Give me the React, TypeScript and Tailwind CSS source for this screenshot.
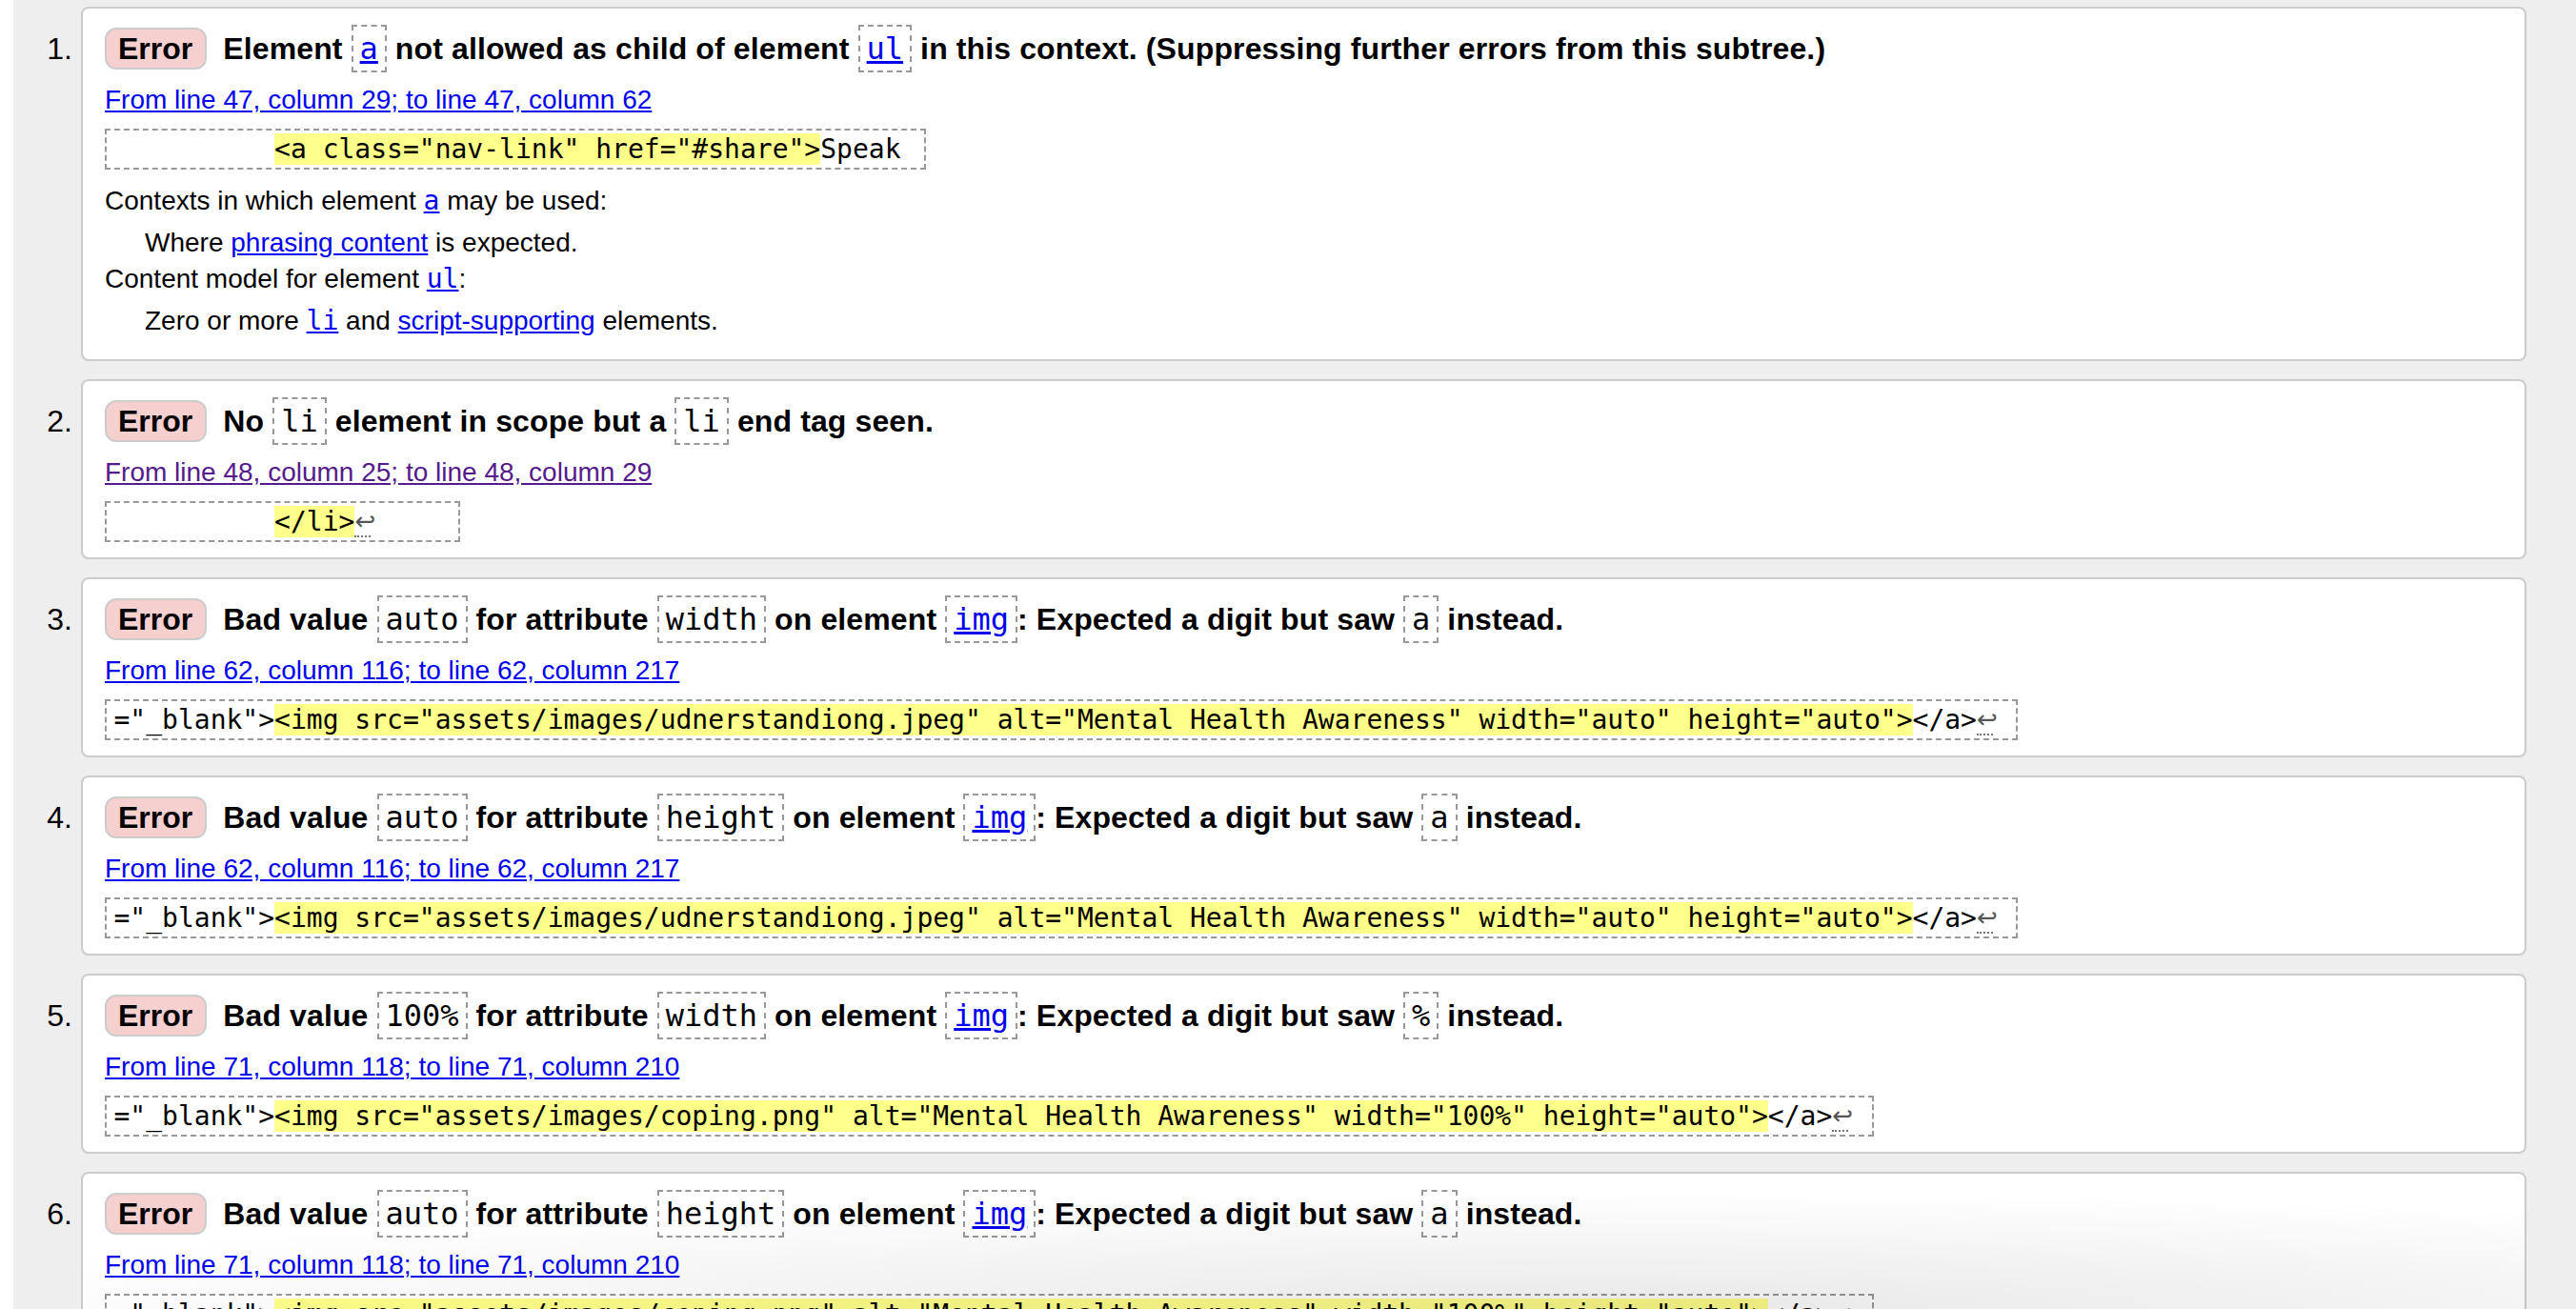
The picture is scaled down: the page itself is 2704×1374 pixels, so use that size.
import React from "react";

type Part = string | { c: string; link?: boolean };

const LINK = "text-[#0000ee] underline";

function TitleCode({ c, link }: { c: string; link?: boolean }) {
  return (
    <code className="font-['DejaVu_Sans_Mono',monospace] font-normal tracking-normal border-2 border-dashed border-[#999] px-[7px] py-[4px]">
      {link ? <span className={LINK}>{c}</span> : c}
    </code>
  );
}

function Title({ parts }: { parts: Part[] }) {
  return (
    <div className="text-[32px] leading-[44px] font-bold">
      <span className="inline-block h-[44px] leading-[40px] border-2 border-[#ccc] bg-[#f6cfcf] rounded-[12px] pl-[12px] pr-[13px] align-baseline">
        Error
      </span>
      <span className="ml-[17px] tracking-[0.12px]">
        {parts.map((p, i) =>
          typeof p === "string" ? (
            <React.Fragment key={i}>{p}</React.Fragment>
          ) : (
            <TitleCode key={i} c={p.c} link={p.link} />
          )
        )}
      </span>
    </div>
  );
}

function Location({ text, visited }: { text: string; visited?: boolean }) {
  return (
    <div className="mt-[16px] text-[28px] leading-[32px]">
      <a className={visited ? "text-[#551a8b] underline" : LINK} href="#">
        {text}
      </a>
    </div>
  );
}

function Extract({
  before,
  hl,
  after,
  lf,
  trail,
}: {
  before: string;
  hl: string;
  after: string;
  lf?: boolean;
  trail: string;
}) {
  return (
    <div className="mt-[14px]">
      <code className="block w-fit whitespace-pre border-2 border-dashed border-[#999] px-[7.5px] py-[3px] text-[28px] leading-[33px] font-['DejaVu_Sans_Mono',monospace] text-black">
        {before}
        <span className="bg-[#ffff8a]">{hl}</span>
        {after}
        {lf ? (
          <span className="inline-block align-top w-[17px] h-[33px] leading-[33px] text-[#555] border-b-2 border-dotted border-[#777] overflow-visible font-['DejaVu_Sans',sans-serif] text-[26px]">
            ↩
          </span>
        ) : null}
        {trail}
      </code>
    </div>
  );
}

function Item({ n, children }: { n: number; children: React.ReactNode }) {
  return (
    <div className="flex">
      <div className="w-[71px] shrink-0 text-right pr-[9px] pt-[22px] text-[32px] leading-[44px]">
        {n}.
      </div>
      <div className="flex-1 bg-white border-2 border-[#ccc] rounded-[8px] pl-[23px] pr-[23px] pt-[20px] pb-[16px]">
        {children}
      </div>
    </div>
  );
}

const SP10 = "          ";

export default function App() {
  const imgExtract1 =
    '<img src="assets/images/udnerstandiong.jpeg" alt="Mental Health Awareness" width="auto" height="auto">';
  const imgExtract2 =
    '<img src="assets/images/coping.png" alt="Mental Health Awareness" width="100%" height="auto">';
  return (
    <div className="relative flex h-[1374px] overflow-hidden bg-white text-black font-['Liberation_Sans',Arial,sans-serif]">
      <div className="w-[14px] shrink-0 bg-white" />
      <div className="flex-1 bg-[#eee] pt-[7px] pr-[52px] flex flex-col gap-[19px]">
        <Item n={1}>
          <Title
            parts={[
              "Element ",
              { c: "a", link: true },
              " not allowed as child of element ",
              { c: "ul", link: true },
              " in this context. (Suppressing further errors from this subtree.)",
            ]}
          />
          <Location text="From line 47, column 29; to line 47, column 62" />
          <Extract
            before={SP10}
            hl={'<a class="nav-link" href="#share">'}
            after="Speak"
            trail=" "
          />
          <div className="text-[28px] leading-[32px] mb-[8px]">
            <div className="mt-[17px]">
              Contexts in which element{" "}
              <a href="#" className={LINK}>
                <code className="font-['DejaVu_Sans_Mono',monospace]">a</code>
              </a>{" "}
              may be used:
            </div>
            <div className="mt-[12px] pl-[42px]">
              Where{" "}
              <a href="#" className={LINK}>
                phrasing content
              </a>{" "}
              is expected.
            </div>
            <div className="mt-[6px]">
              Content model for element{" "}
              <a href="#" className={LINK}>
                <code className="font-['DejaVu_Sans_Mono',monospace]">ul</code>
              </a>
              :
            </div>
            <div className="mt-[12px] pl-[42px]">
              Zero or more{" "}
              <a href="#" className={LINK}>
                <code className="font-['DejaVu_Sans_Mono',monospace]">li</code>
              </a>{" "}
              and{" "}
              <a href="#" className={LINK}>
                script-supporting
              </a>{" "}
              elements.
            </div>
          </div>
        </Item>
        <Item n={2}>
          <Title
            parts={["No ", { c: "li" }, " element in scope but a ", { c: "li" }, " end tag seen."]}
          />
          <Location text="From line 48, column 25; to line 48, column 29" visited />
          <Extract before={SP10} hl="</li>" after="" lf trail="     " />
        </Item>
        <Item n={3}>
          <Title
            parts={[
              "Bad value ",
              { c: "auto" },
              " for attribute ",
              { c: "width" },
              " on element ",
              { c: "img", link: true },
              ": Expected a digit but saw ",
              { c: "a" },
              " instead.",
            ]}
          />
          <Location text="From line 62, column 116; to line 62, column 217" />
          <Extract before={'="_blank">'} hl={imgExtract1} after="</a>" lf trail=" " />
        </Item>
        <Item n={4}>
          <Title
            parts={[
              "Bad value ",
              { c: "auto" },
              " for attribute ",
              { c: "height" },
              " on element ",
              { c: "img", link: true },
              ": Expected a digit but saw ",
              { c: "a" },
              " instead.",
            ]}
          />
          <Location text="From line 62, column 116; to line 62, column 217" />
          <Extract before={'="_blank">'} hl={imgExtract1} after="</a>" lf trail=" " />
        </Item>
        <Item n={5}>
          <Title
            parts={[
              "Bad value ",
              { c: "100%" },
              " for attribute ",
              { c: "width" },
              " on element ",
              { c: "img", link: true },
              ": Expected a digit but saw ",
              { c: "%" },
              " instead.",
            ]}
          />
          <Location text="From line 71, column 118; to line 71, column 210" />
          <Extract before={'="_blank">'} hl={imgExtract2} after="</a>" lf trail=" " />
        </Item>
        <Item n={6}>
          <Title
            parts={[
              "Bad value ",
              { c: "auto" },
              " for attribute ",
              { c: "height" },
              " on element ",
              { c: "img", link: true },
              ": Expected a digit but saw ",
              { c: "a" },
              " instead.",
            ]}
          />
          <Location text="From line 71, column 118; to line 71, column 210" />
          <Extract before={'="_blank">'} hl={imgExtract2} after="</a>" lf trail=" " />
        </Item>
      </div>
      <div className="pointer-events-none absolute left-[85px] w-[2567px] top-[1250px] h-[124px] bg-[radial-gradient(ellipse_70%_100%_at_62%_100%,rgba(0,0,0,0.09),rgba(0,0,0,0)_100%)]" />
    </div>
  );
}
